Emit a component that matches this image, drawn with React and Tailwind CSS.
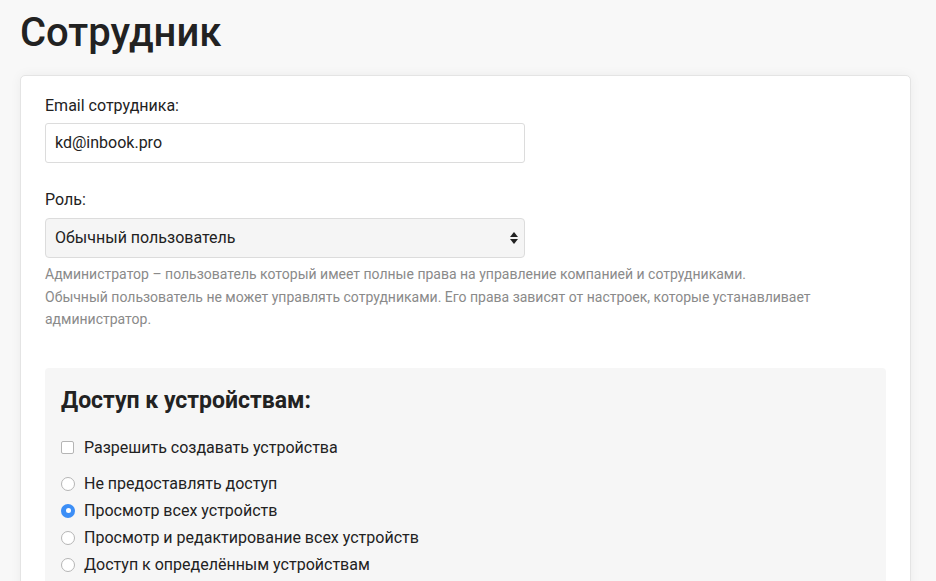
export default function App() {
    const radios = [
        { label: "Не предоставлять доступ", checked: false },
        { label: "Просмотр всех устройств", checked: true },
        { label: "Просмотр и редактирование всех устройств", checked: false },
        { label: "Доступ к определённым устройствам", checked: false },
    ];

    return (
        <div className="min-h-screen bg-[#f8f8f8] pl-5 pr-[25px] pt-[9px] pb-10 text-[#222] font-['Roboto',sans-serif]">
            <h1 className="text-[40px] leading-[48px] font-medium text-[#222] mb-[18px]">Сотрудник</h1>

            <div className="bg-white border border-[#e4e4e4] rounded-[5px] shadow-[0_0_12px_rgba(0,0,0,0.05)] px-6 pt-[18px] pb-6">
                <label className="block text-base leading-6 mb-[5px]">Email сотрудника:</label>
                <div className="w-[480px] h-10 border border-[#dcdcdc] rounded-[3px] bg-white flex items-center px-[9px] text-base">
                    kd@inbook.pro
                </div>

                <label className="block text-base leading-6 mt-[25px] mb-[6px]">Роль:</label>
                <div className="w-[480px] h-10 border border-[#dcdcdc] rounded-[4px] bg-[#f5f5f5] flex items-center justify-between pl-[9px] pr-[4px] text-base">
                    <span>Обычный пользователь</span>
                    <svg width="12" height="14" viewBox="0 0 12 14" className="text-[#222]">
                        <path d="M6 1 L10 6 L2 6 Z" fill="currentColor" />
                        <path d="M6 13 L10 8 L2 8 Z" fill="currentColor" />
                    </svg>
                </div>

                <div className="mt-[5px] text-sm leading-[22.5px] text-[#8a8a8a]">
                    <p>Администратор – пользователь который имеет полные права на управление компанией и сотрудниками.</p>
                    <p>Обычный пользователь не может управлять сотрудниками. Его права зависят от настроек, которые устанавливает администратор.</p>
                </div>

                <div className="mt-[37px] bg-[#f6f6f6] rounded-[4px] px-4 pt-[17px] pb-6">
                    <h2 className="text-[23px] leading-8 font-bold text-[#222]">Доступ к устройствам:</h2>

                    <div className="mt-[19px] flex items-center gap-[10px] h-6 text-base">
                        <span className="w-[13px] h-[13px] border border-[#b5b5b5] rounded-[2px] bg-white" />
                        <span>Разрешить создавать устройства</span>
                    </div>

                    <div className="mt-3 flex flex-col gap-[3px]">
                        {radios.map((r) => (
                            <div key={r.label} className="flex items-center gap-[9px] h-6 text-base">
                                {r.checked ? (
                                    <span className="w-[14px] h-[14px] rounded-full bg-[#3c8ef6] flex items-center justify-center">
                                        <span className="w-[5px] h-[5px] rounded-full bg-white" />
                                    </span>
                                ) : (
                                    <span className="w-[14px] h-[14px] rounded-full border border-[#b5b5b5] bg-white" />
                                )}
                                <span>{r.label}</span>
                            </div>
                        ))}
                    </div>
                </div>
            </div>
        </div>
    );
}
